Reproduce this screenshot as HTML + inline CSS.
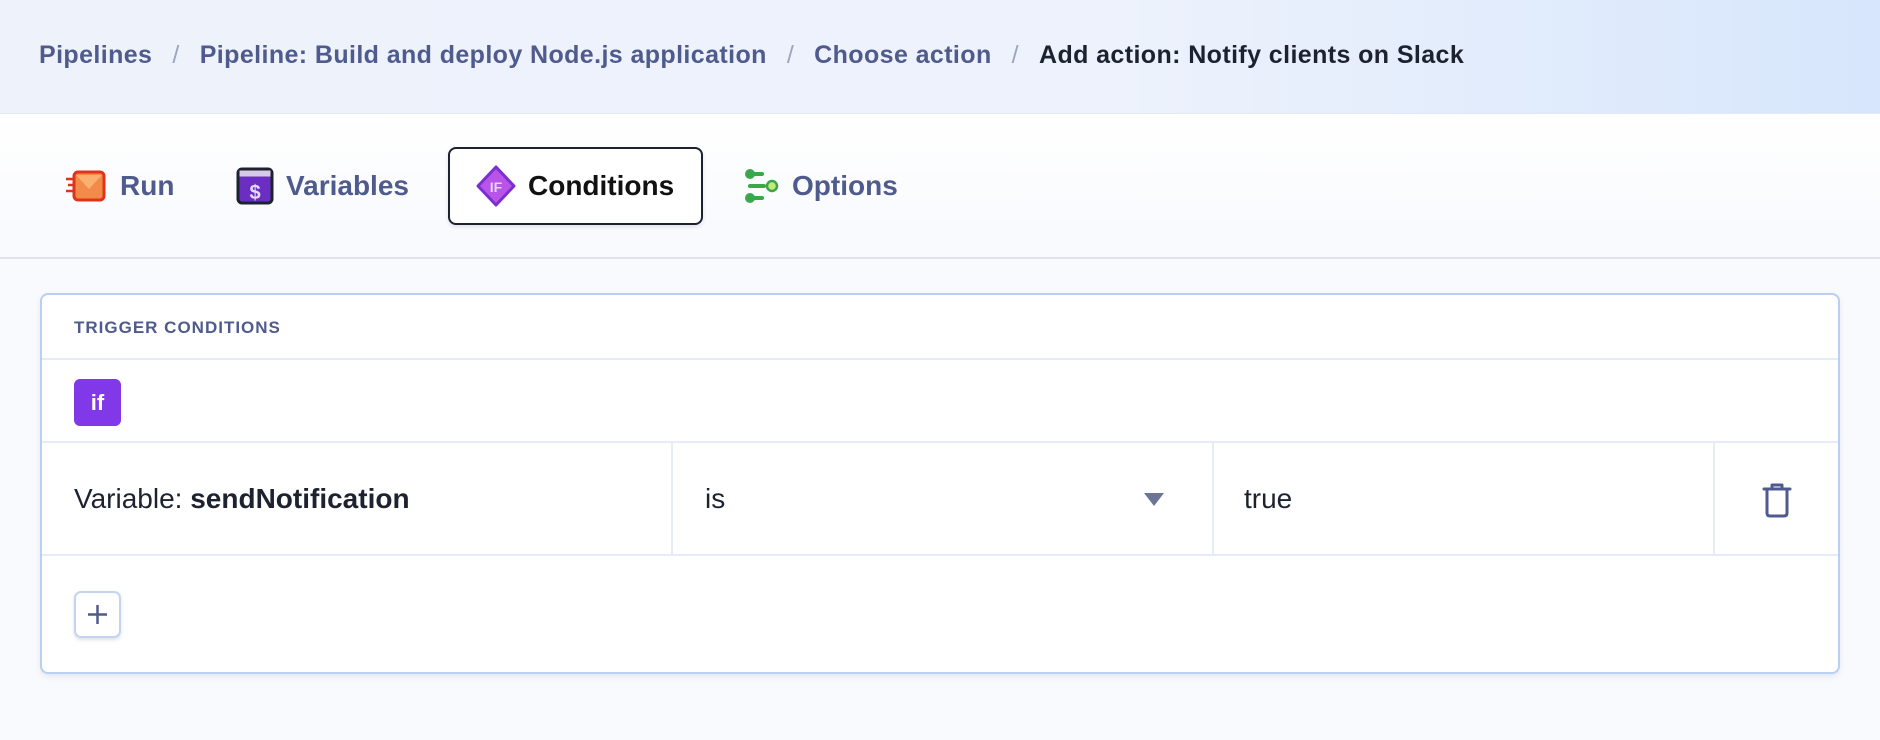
<!DOCTYPE html>
<html><head><meta charset="utf-8"><style>
*{box-sizing:border-box;margin:0;padding:0}
body{width:1880px;height:740px;background:#f9fafd;font-family:"Liberation Sans",sans-serif;position:relative;overflow:hidden}
.hdr{position:absolute;left:0;top:0;width:1880px;height:114px;background:linear-gradient(90deg,#eef2fb 0%,#edf2fc 60%,#d7e6fc 100%);border-bottom:1px solid #e3e8f3}
.bc{position:absolute;top:41px;left:39px;font-size:25px;font-weight:bold;color:#4f5b8c;white-space:nowrap;letter-spacing:0.4px}
.bc .s{color:#9ea6bd;font-weight:normal;margin:0 20px}
.bc .c{color:#1d2230}
.tabs{position:absolute;top:114px;left:0;width:1880px;height:145px;background:linear-gradient(#fff,#f7f9fd);border-bottom:2px solid #dde4f0}
.tab{position:absolute;top:33px;height:78px;display:flex;align-items:center;font-size:28px;font-weight:bold;color:#4f5b8c}
.tab svg{margin-right:12px}
.act{border:2px solid #1d2230;border-radius:8px;background:#fff;color:#111;padding:0 26px;box-shadow:0 2px 4px rgba(0,0,0,.1)}
.card{position:absolute;left:40px;top:293px;width:1800px;height:381px;background:#fff;border:2px solid #b9d0f0;border-radius:8px;box-shadow:0 3px 6px rgba(120,140,180,.15)}
.row{position:absolute;left:0;width:100%;border-bottom:2px solid #e6ecf7}
.tc{font-size:17px;font-weight:bold;color:#4f5b8c;position:absolute;left:32px;top:23px;letter-spacing:1px}
.ifb{position:absolute;left:32px;top:84px;width:47px;height:47px;background:#8038e8;border-radius:6px;color:#fff;font-size:22px;font-weight:bold;text-align:center;line-height:47px}
.cell{position:absolute;top:147px;height:114px;display:flex;align-items:center;font-size:28px;color:#1d2230}
.vl{position:absolute;top:147px;width:2px;height:113px;background:#e6ecf7}
.plus{position:absolute;left:32px;top:296px;width:47px;height:47px;border:2px solid #c4d4ef;border-radius:7px;box-shadow:0 2px 3px rgba(120,140,180,.25)}
</style></head><body>
<div class="hdr"><div class="bc">Pipelines<span class="s">/</span>Pipeline: Build and deploy Node.js application<span class="s">/</span>Choose action<span class="s">/</span><span class="c">Add action: Notify clients on Slack</span></div></div>
<div class="tabs">
<div class="tab" style="left:64px"><svg width="44" height="34" viewBox="0 0 44 34"><g stroke="#e0331c" stroke-width="2.5"><line x1="2" y1="10" x2="12" y2="10"/><line x1="4" y1="16" x2="12" y2="16"/><line x1="2" y1="22" x2="12" y2="22"/></g><rect x="10" y="3" width="30" height="28" rx="4" fill="#f28a4a" stroke="#e0331c" stroke-width="3"/><path d="M12 6 L25 20 L38 6" fill="#fbb070" stroke="none"/></svg>Run</div>
<div class="tab" style="left:236px"><svg width="38" height="38" viewBox="0 0 38 38"><rect x="2" y="2" width="34" height="34" rx="4" fill="#6a2fc2" stroke="#1d2230" stroke-width="3"/><rect x="3.5" y="3.5" width="31" height="6" fill="#d5cbe8"/><text x="19" y="32" font-size="20" font-weight="bold" fill="#e5dbf5" text-anchor="middle" font-family="Liberation Sans">$</text></svg>Variables</div>
<div class="tab act" style="left:448px;width:255px"><svg width="40" height="42" viewBox="0 0 40 42"><path d="M20 2 L38 21 L20 40 L2 21 Z" fill="#b954e8" stroke="#7b2fd0" stroke-width="3" stroke-linejoin="round"/><text x="20" y="27" font-size="14" fill="#e8d5f8" text-anchor="middle" font-family="Liberation Sans">IF</text></svg>Conditions</div>
<div class="tab" style="left:744px"><svg width="36" height="36" viewBox="0 0 36 36"><g fill="#3aa84a"><circle cx="6" cy="6" r="5"/><circle cx="6" cy="30" r="5"/><rect x="8" y="4" width="12" height="4" rx="2"/><rect x="8" y="28" width="12" height="4" rx="2"/><rect x="4" y="16" width="18" height="4" rx="2"/></g><circle cx="28" cy="18" r="5" fill="#c8e87a" stroke="#3aa84a" stroke-width="2.5"/></svg>Options</div>
</div>
<div class="card">
<div class="row" style="top:0;height:65px"></div><div class="tc">TRIGGER CONDITIONS</div>
<div class="row" style="top:0;height:148px"></div><div class="ifb">if</div>
<div class="row" style="top:0;height:261px"></div>
<div class="cell" style="left:32px">Variable:&nbsp;<b>sendNotification</b></div>
<div class="vl" style="left:629px"></div>
<div class="cell" style="left:663px">is</div>
<svg style="position:absolute;left:1102px;top:198px" width="20" height="14"><path d="M0 0 H20 L10 13 Z" fill="#6b7596"/></svg>
<div class="vl" style="left:1170px"></div>
<div class="cell" style="left:1202px">true</div>
<div class="vl" style="left:1671px"></div>
<svg style="position:absolute;left:1720px;top:186px" width="30" height="38" viewBox="0 0 30 38" fill="none" stroke="#4f5b8c" stroke-width="3" stroke-linecap="round" stroke-linejoin="round"><line x1="2" y1="8" x2="28" y2="8"/><path d="M10 8 V4 H20 V8"/><path d="M5 8 V32 Q5 35 8 35 H22 Q25 35 25 32 V8"/></svg>
<div class="plus"><svg width="43" height="43" viewBox="0 0 43 43" stroke="#4f5b8c" stroke-width="2.5"><line x1="21.5" y1="12" x2="21.5" y2="31"/><line x1="12" y1="21.5" x2="31" y2="21.5"/></svg></div>
</div>
</body></html>
